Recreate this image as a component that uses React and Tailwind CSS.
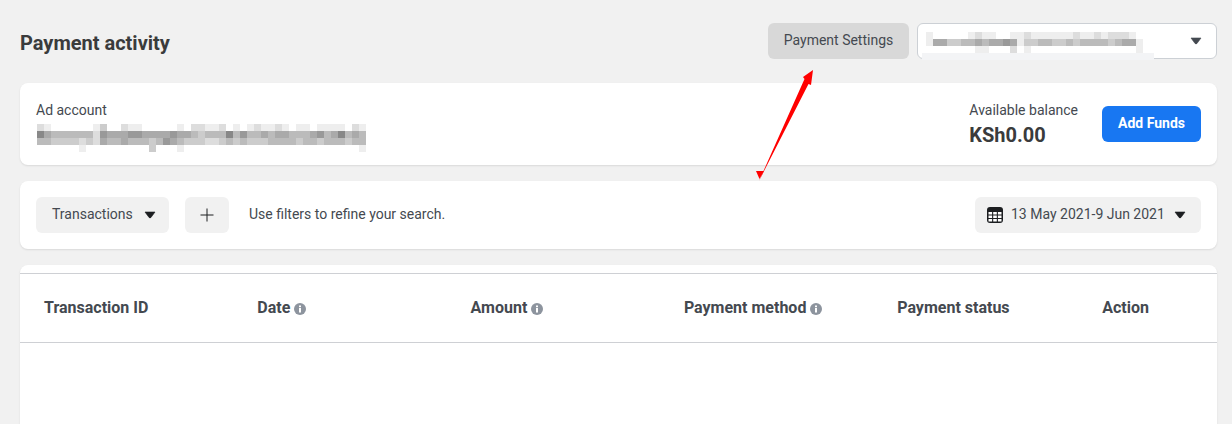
const accountMosaic = [
  'deffffffecffdeefffffefddeedfefedeedefeefeeeefde',
  '8abbbbbbd9aaa99aaaa9aabcbbb8b9bbabaabbba9ba8bab',
  'bbccccdcdabbabbbcb9abcccddcbcbcccbbbbcbbcbbbcbb',
  'ffffffefffffffffcfffefffffffffffffffffffffffffe',
];
const selectMosaic = [
  'efffffedeeffeedeeeeeedeededddef',
  'eaaccbbabaa9aeccbbccbcbbbbcbaae',
  'fffffffeefffdfefffffffffffffffe',
];

function Mosaic({ rows, size = 7 }) {
  return (
    <svg width={rows[0].length * size} height={rows.length * size} className="block">
      {rows.map((row, y) =>
        row.split('').map((c, x) => (
          <rect key={`${x}-${y}`} x={x * size} y={y * size} width={size} height={size} fill={`#${c}${c}${c}`} />
        ))
      )}
    </svg>
  );
}

const Caret = ({ className = '' }) => (
  <svg width="12" height="8" viewBox="0 0 12 8" className={className}>
    <path d="M1 1h10L7 6.4q-1 1-2 0z" fill="currentColor" stroke="currentColor" strokeWidth="0.6" strokeLinejoin="round" />
  </svg>
);

const InfoIcon = () => (
  <svg width="12" height="12" viewBox="0 0 12 12" className="ml-[4px] mt-[2px]">
    <circle cx="6" cy="6" r="6" fill="#8d949e" />
    <rect x="5" y="5" width="2" height="4.5" fill="#fff" />
    <rect x="5" y="2.5" width="2" height="1.7" fill="#fff" />
  </svg>
);

const CalendarIcon = () => (
  <svg width="16" height="16" viewBox="0 0 16 16">
    <rect width="16" height="16" rx="3" fill="#1c1e21" />
    <rect x="1.5" y="5" width="3.6" height="2.5" fill="#fff" />
    <rect x="6.2" y="5" width="3.6" height="2.5" fill="#fff" />
    <rect x="10.9" y="5" width="3.6" height="2.5" fill="#fff" />
    <rect x="1.5" y="8.5" width="3.6" height="2.5" fill="#fff" />
    <rect x="6.2" y="8.5" width="3.6" height="2.5" fill="#fff" />
    <rect x="10.9" y="8.5" width="3.6" height="2.5" fill="#fff" />
    <rect x="1.5" y="12" width="3.6" height="2.5" fill="#fff" />
    <rect x="6.2" y="12" width="3.6" height="2.5" fill="#fff" />
    <rect x="10.9" y="12" width="3.6" height="2.5" fill="#fff" />
  </svg>
);

const columns = [
  { label: 'Transaction ID' },
  { label: 'Date', info: true },
  { label: 'Amount', info: true },
  { label: 'Payment method', info: true },
  { label: 'Payment status' },
  { label: 'Action' },
];

export default function App() {
  return (
    <div className="relative h-[424px] overflow-hidden bg-[#f1f1f1] pl-[20px] pr-[15px] pt-[23px] font-['Roboto',sans-serif] text-[14px] text-[#444950]">
      {/* Header */}
      <div className="flex h-[36px] items-center">
        <h1 className="mt-[4px] text-[20px] font-bold text-[#3a3b3c]">Payment activity</h1>
        <button className="ml-auto h-[36px] w-[141px] rounded-[6px] bg-[#d8d8d8] pb-[2px] text-[14px] text-[#444950]">
          Payment Settings
        </button>
        <div className="relative ml-[8px] flex h-[36px] w-[300px] items-center justify-end rounded-[6px] border border-[#ccd0d5] bg-white pr-[14px]">
          <div className="absolute left-[8px] top-[8px]">
            <Mosaic rows={selectMosaic} />
          </div>
          <div className="absolute left-[4px] top-[29px] h-[7px] w-[232px] bg-[#f3f4f6]" />
          <Caret className="text-[#444950]" />
        </div>
      </div>

      {/* Account card */}
      <div className="mt-[24px] flex h-[82px] items-center rounded-[8px] bg-white pl-[17px] pr-[16px] shadow-[0_1px_2px_rgba(0,0,0,0.1)]">
        <div className="self-start pt-[19px]">
          <div className="-ml-[1px] h-[17px] leading-[17px]">Ad account</div>
          <div className="mt-[5px]">
            <Mosaic rows={accountMosaic} />
          </div>
        </div>
        <div className="ml-auto">
          <div className="leading-[17px]">Available balance</div>
          <div className="mt-[4px] text-[20px] font-bold leading-[24px] text-[#3a3b3c]">KSh0.00</div>
        </div>
        <button className="ml-[24px] h-[36px] w-[99px] rounded-[6px] bg-[#1877f2] pb-[2px] text-[14px] font-bold text-white">
          Add Funds
        </button>
      </div>

      {/* Filters card */}
      <div className="mt-[16px] flex h-[68px] items-center rounded-[8px] bg-white px-[16px] shadow-[0_1px_2px_rgba(0,0,0,0.1)]">
        <button className="flex h-[36px] w-[133px] items-center rounded-[6px] bg-[#f1f1f1] pl-[16px]">
          <span className="pb-[2px]">Transactions</span>
          <Caret className="ml-[11px] text-[#1c1e21]" />
        </button>
        <button className="ml-[16px] flex h-[36px] w-[44px] items-center justify-center rounded-[6px] bg-[#f1f1f1]">
          <svg width="14" height="14" viewBox="0 0 14 14">
            <path d="M7 0.5v13M0.5 7h13" stroke="#1c1e21" strokeWidth="1" fill="none" />
          </svg>
        </button>
        <span className="ml-[20px] pb-[2px]">Use filters to refine your search.</span>
        <button className="ml-auto flex h-[36px] w-[226px] items-center rounded-[6px] bg-[#f1f1f1] pl-[12px]">
          <CalendarIcon />
          <span className="ml-[8px] pb-[2px]">13 May 2021-9 Jun 2021</span>
          <Caret className="ml-[9px] text-[#1c1e21]" />
        </button>
      </div>

      {/* Table card */}
      <div className="mt-[16px] h-[200px] rounded-t-[8px] bg-white pt-[8px] shadow-[0_1px_2px_rgba(0,0,0,0.1)]">
        <div className="grid h-[70px] grid-cols-[repeat(4,213.3px)_205px_1fr] items-center border-y border-[#ced0d4] pl-[24px]">
          {columns.map(col => (
            <div key={col.label} className="flex items-center text-[16px] font-bold leading-[20px] text-[#444950]">
              {col.label}
              {col.info && <InfoIcon />}
            </div>
          ))}
        </div>
      </div>

      {/* Red annotation arrow */}
      <svg width="1232" height="424" className="pointer-events-none absolute left-0 top-0">
        <path d="M813 70L803 77L804.5 79L759 181L808.5 84L811 85Z" fill="#ff0000" />
        <path d="M756 171L764 171L759.5 179Z" fill="#ff0000" />
      </svg>
    </div>
  );
}
